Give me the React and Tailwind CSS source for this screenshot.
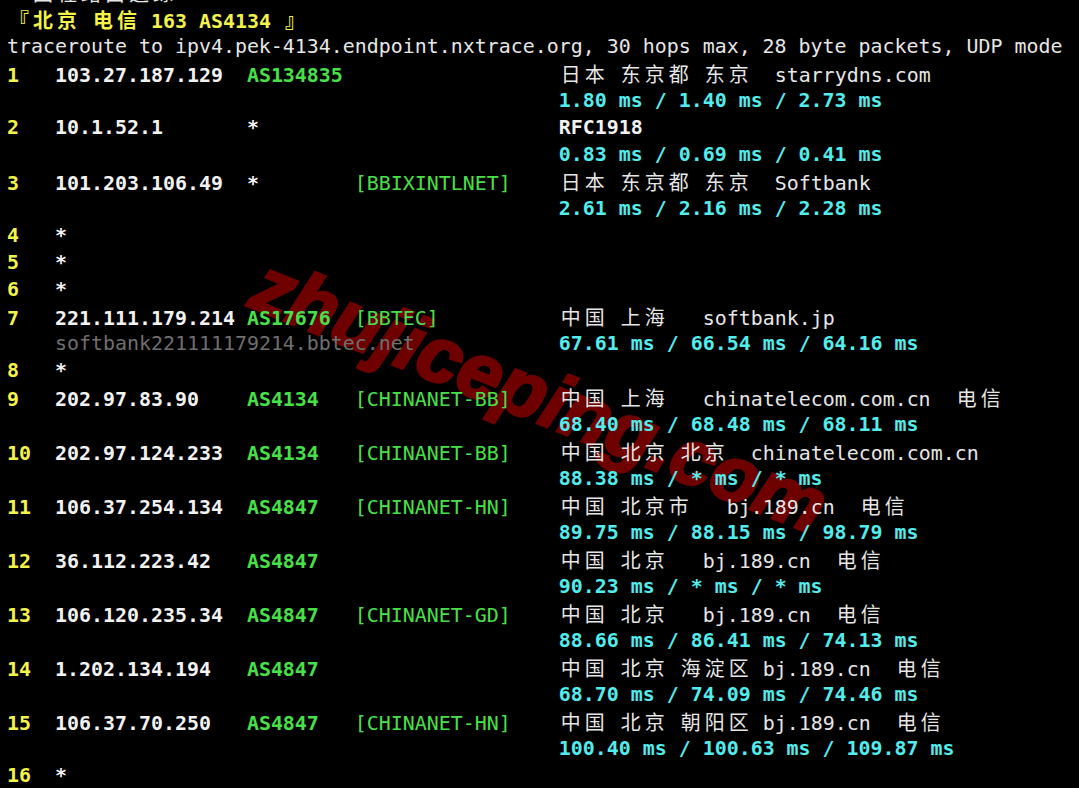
// nexttrace output, drawn as a terminal screen

const Y = 'text-[#f3f34a] font-bold';
const W = 'text-[#f2f2f2] font-bold';
const G = 'text-[#48e048] font-bold';
const GN = 'text-[#48e048]';
const C = 'text-[#52ecec] font-bold';
const N = 'text-[#e6e6e6]';
const D = 'text-[#6f6f6f]';

const isWide = (ch) => /[\u2e80-\uffef]/.test(ch);

function Seg({ text, cls }) {
  const parts = [];
  let buf = '';
  [...text].forEach((ch, i) => {
    if (isWide(ch)) {
      if (buf) parts.push(buf);
      buf = '';
      parts.push(
        <span
          key={i}
          className="inline-block w-[24px] text-center font-['Noto_Sans_CJK_SC',sans-serif]"
        >
          {ch}
        </span>
      );
    } else {
      buf += ch;
    }
  });
  if (buf) parts.push(buf);
  return <span className={cls}>{parts}</span>;
}

const pad = (s, n) => s.padEnd(n, ' ');

function hop(n, ip, asn, net, geo) {
  return [
    [pad(n, 4), Y],
    [pad(ip, 16), W],
    [pad(asn, 9), asn === '*' ? W : G],
    [pad(net, 17), GN],
    ...geo,
  ];
}

const times = (t) => [[' '.repeat(46), N], [t, C]];
const star = (n) => [[pad(n, 4), Y], ['*', W]];

const lines = [
  [['  回程路由追踪', N]],
  [['『北京 电信 163 AS4134 』', Y]],
  [['traceroute to ipv4.pek-4134.endpoint.nxtrace.org, 30 hops max, 28 byte packets, UDP mode', N]],
  hop('1', '103.27.187.129', 'AS134835', '', [['日本 东京都 东京  starrydns.com', N]]),
  times('1.80 ms / 1.40 ms / 2.73 ms'),
  hop('2', '10.1.52.1', '*', '', [['RFC1918', W]]),
  times('0.83 ms / 0.69 ms / 0.41 ms'),
  hop('3', '101.203.106.49', '*', '[BBIXINTLNET]', [['日本 东京都 东京  Softbank', N]]),
  times('2.61 ms / 2.16 ms / 2.28 ms'),
  star('4'),
  star('5'),
  star('6'),
  hop('7', '221.111.179.214', 'AS17676', '[BBTEC]', [['中国 上海   softbank.jp', N]]),
  [['    ', N], ['softbank221111179214.bbtec.net', D], [' '.repeat(12), N], ['67.61 ms / 66.54 ms / 64.16 ms', C]],
  star('8'),
  hop('9', '202.97.83.90', 'AS4134', '[CHINANET-BB]', [['中国 上海   chinatelecom.com.cn  电信', N]]),
  times('68.40 ms / 68.48 ms / 68.11 ms'),
  hop('10', '202.97.124.233', 'AS4134', '[CHINANET-BB]', [['中国 北京 北京  chinatelecom.com.cn', N]]),
  times('88.38 ms / * ms / * ms'),
  hop('11', '106.37.254.134', 'AS4847', '[CHINANET-HN]', [['中国 北京市   bj.189.cn  电信', N]]),
  times('89.75 ms / 88.15 ms / 98.79 ms'),
  hop('12', '36.112.223.42', 'AS4847', '', [['中国 北京   bj.189.cn  电信', N]]),
  times('90.23 ms / * ms / * ms'),
  hop('13', '106.120.235.34', 'AS4847', '[CHINANET-GD]', [['中国 北京   bj.189.cn  电信', N]]),
  times('88.66 ms / 86.41 ms / 74.13 ms'),
  hop('14', '1.202.134.194', 'AS4847', '', [['中国 北京 海淀区 bj.189.cn  电信', N]]),
  times('68.70 ms / 74.09 ms / 74.46 ms'),
  hop('15', '106.37.70.250', 'AS4847', '[CHINANET-HN]', [['中国 北京 朝阳区 bj.189.cn  电信', N]]),
  times('100.40 ms / 100.63 ms / 109.87 ms'),
  star('16'),
];

export default function App() {
  return (
    <div className="relative w-[1079px] h-[788px] overflow-hidden bg-black">
      {/* watermark */}
      <div className="absolute left-[540px] top-[395px] -translate-x-1/2 -translate-y-1/2 rotate-[22deg] whitespace-nowrap font-['Liberation_Sans',sans-serif] font-bold italic text-[78px] leading-none text-[#6e0000] [-webkit-text-stroke:3px_#6e0000]">
        zhujiceping.com
      </div>

      <div className="relative -mt-[21px] pl-[7px] font-['DejaVu_Sans_Mono',monospace] text-[19.93px] leading-[27px]">
        {lines.map((segs, i) => (
          <div key={i} className="h-[27px] whitespace-pre">
            {segs.map(([t, cls], j) => (
              <Seg key={j} text={t} cls={cls} />
            ))}
          </div>
        ))}
      </div>
    </div>
  );
}
